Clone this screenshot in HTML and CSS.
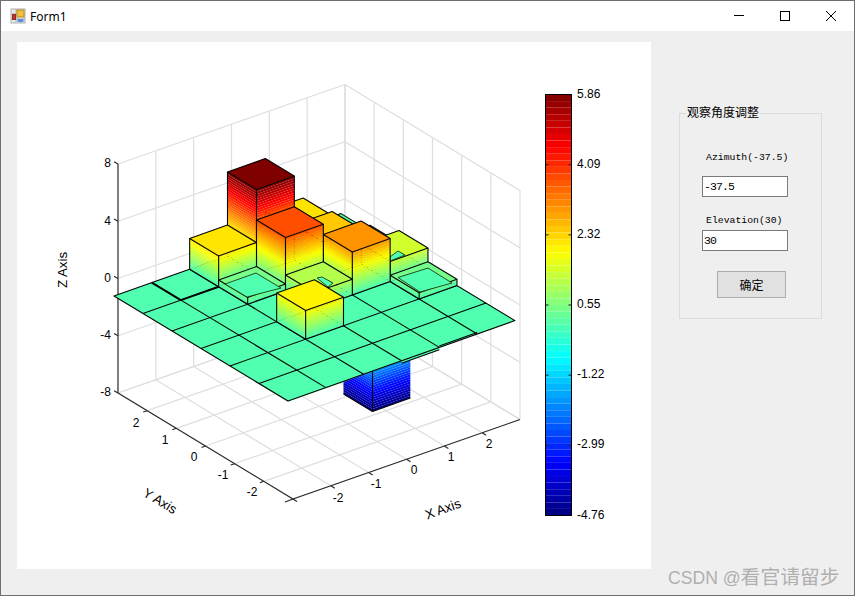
FILE: index.html
```html
<!DOCTYPE html>
<html lang="zh-CN">
  <head>
    <meta charset="UTF-8" />
    <title>Form1</title>
    <link rel="stylesheet" href="styles.css">
  </head>
  <body>
    <div class="window">
      <div class="titlebar">
        <svg class="app-icon" width="16" height="16" viewBox="0 0 16 16">
          <rect x="1" y="1" width="14" height="14" fill="#e8e8e8" stroke="#b0b0b0" />
          <path d="M1 6h5M6 1v14M1 11h14M11 11v4" stroke="#b0b0b0" fill="none" />
          <rect x="7" y="2" width="7" height="7" fill="#f3c13a" stroke="#b8862a" />
          <rect x="2.5" y="6.5" width="3" height="5" fill="#c8342c" stroke="#8e2a22" />
          <rect x="7.5" y="11" width="6" height="3" fill="#5b8fdc" />
        </svg>
        <span class="title-text">Form1</span>
        <div class="win-controls">
          <div class="win-btn">
            <svg width="12" height="12" viewBox="0 0 12 12"><path d="M1 5.5h10" stroke="#000" /></svg>
          </div>
          <div class="win-btn">
            <svg width="12" height="12" viewBox="0 0 12 12"><rect x="1.5" y="1.5" width="9" height="9" fill="none" stroke="#000" /></svg>
          </div>
          <div class="win-btn">
            <svg width="12" height="12" viewBox="0 0 12 12"><path d="M1 1l10 10M11 1L1 11" stroke="#000" /></svg>
          </div>
        </div>
      </div>

      <div class="client">
        <div class="picture">
          <svg id="chart" width="634" height="527" viewBox="17 42 634 527" xmlns="http://www.w3.org/2000/svg"></svg>
        </div>

        <fieldset class="view-group">
          <legend>观察角度调整</legend>
          <div class="view-form">
            <label class="field-label first">Azimuth(-37.5)</label>
            <input class="field-input first" type="text" value="-37.5" />
            <label class="field-label second">Elevation(30)</label>
            <input class="field-input second" type="text" value="30" />
            <button class="ok-btn">确定</button>
          </div>
        </fieldset>
      </div>

      <div class="watermark"><span class="wm-latin">CSDN @</span>看官请留步</div>
    </div>

    <script src="chart.js"></script>
  </body>
</html>
```

FILE: styles.css
```css
* {
  box-sizing: border-box;
}

body {
  margin: 0;
  width: 855px;
  height: 596px;
  overflow: hidden;
  font-family: "Liberation Sans", "Noto Sans CJK SC", sans-serif;
}

.window {
  position: relative;
  display: flex;
  flex-direction: column;
  width: 855px;
  height: 596px;
  border: 1px solid #6f6f6f;
  background: #efefef;
}

.titlebar {
  display: flex;
  align-items: center;
  height: 30px;
  background: #ffffff;
  padding-left: 9px;
}

.app-icon {
  flex: none;
}

.title-text {
  margin-left: 4px;
  font-family: "Noto Sans", sans-serif;
  font-size: 12px;
  color: #000000;
}

.win-controls {
  display: flex;
  margin-left: auto;
}

.win-btn {
  display: flex;
  align-items: center;
  justify-content: center;
  width: 46px;
  height: 30px;
}

.client {
  flex: 1;
  display: flex;
  align-items: flex-start;
  padding: 11px 0 0 16px;
}

.picture {
  flex: none;
  width: 634px;
  height: 527px;
  background: #ffffff;
}

#chart {
  display: block;
}

.grid-line {
  stroke: #dedede;
  stroke-width: 1.2;
  fill: none;
}

.axis-line {
  stroke: #262626;
  stroke-width: 1.1;
  fill: none;
}

.edge {
  stroke: #050505;
  stroke-width: 1.1;
  fill: none;
  stroke-linejoin: round;
}

.edge-thick {
  stroke-width: 2;
}

.edge-thin {
  stroke: #1a3a1a;
  stroke-width: 0.9;
}

.cbar-frame {
  stroke: #000000;
  stroke-width: 1;
  fill: none;
}

.tick-label {
  font-family: "Liberation Sans", sans-serif;
  font-size: 12px;
  fill: #000000;
}

.axis-title {
  font-size: 13.3px;
}

.view-group {
  flex: none;
  width: 143px;
  height: 214px;
  margin: 63px 0 0 28px;
  padding: 0 0 0 22px;
  border: 1px solid #dcdcdc;
}

.view-group legend {
  margin-left: -16px;
  padding: 0 1px;
  font-size: 12px;
  line-height: 16px;
  color: #000000;
}

.view-form {
  display: flex;
  flex-direction: column;
  align-items: flex-start;
}

.field-label {
  margin-left: 4px;
  font-family: "Liberation Mono", monospace;
  font-size: 9.8px;
  line-height: 12px;
  color: #000000;
}

.field-label.first {
  margin-top: 31px;
}

.field-label.second {
  margin-top: 18px;
}

.field-input {
  width: 86px;
  height: 21px;
  padding: 0 1px;
  border: 1px solid #7a7a7a;
  border-radius: 0;
  background: #ffffff;
  font-family: "Liberation Mono", monospace;
  font-size: 11.5px;
  letter-spacing: -0.9px;
  color: #000000;
  outline: none;
}

.field-input.first {
  margin-top: 12px;
}

.field-input.second {
  margin-top: 3px;
}

.ok-btn {
  width: 69px;
  height: 27px;
  margin: 20px 0 0 15px;
  padding: 0;
  border: 1px solid #adadad;
  background: #e1e1e1;
  font-family: "Noto Sans CJK SC", sans-serif;
  font-size: 12px;
  color: #000000;
}

.watermark {
  position: absolute;
  left: 667px;
  top: 561px;
  font-family: "Noto Sans CJK SC", sans-serif;
  font-size: 19.8px;
  line-height: 28px;
  color: #b0b0b0;
  white-space: nowrap;
}

.wm-latin {
  font-family: "Liberation Sans", sans-serif;
  font-size: 17.6px;
}
```

FILE: chart.js
```js
const svg = document.getElementById("chart");
const NS = "http://www.w3.org/2000/svg";

function el(name, attrs, text) {
  const node = document.createElementNS(NS, name);
  for (const key in attrs) node.setAttribute(key, attrs[key]);
  if (text !== undefined) node.textContent = text;
  svg.appendChild(node);
  return node;
}

// jet colormap, value range of the colorbar
const Z_MIN = -4.76;
const Z_MAX = 5.86;
const LEVELS = 64;

function jet(t) {
  const c = (v) => Math.round(255 * Math.max(0, Math.min(1, v)));
  const r = c(Math.min(4 * t - 1.5, -4 * t + 4.5));
  const g = c(Math.min(4 * t - 0.5, -4 * t + 3.5));
  const b = c(Math.min(4 * t + 0.5, -4 * t + 2.5));
  return `rgb(${r},${g},${b})`;
}
const colorOf = (z) => jet((z - Z_MIN) / (Z_MAX - Z_MIN));

// box projection: u, v run 0..6 along x and y, z is data height
const box = (u, v, z) => [118 + 37.83 * u + 29.17 * v, 393 - 13.25 * u + 17.67 * v - 14.31 * (z + 8)];
// bar grid projection, i, j are grid corners of the plane
const P = (i, j, h = 0) => [114 + 37.83 * i + 29 * j, 296 - 13.4 * i + 17.5 * j - 14.31 * h];

const pts = (list) => list.map((p) => p[0].toFixed(2) + "," + p[1].toFixed(2)).join(" ");
const line = (a, b, cls) => el("line", { x1: a[0], y1: a[1], x2: b[0], y2: b[1], class: cls });

// walls and floor
[-8, -4, 0, 4, 8].forEach((z) => {
  line(box(0, 0, z), box(6, 0, z), "grid-line");
  line(box(6, 0, z), box(6, 6, z), "grid-line");
});
for (let k = 0; k <= 6; k++) {
  line(box(k, 0, -8), box(k, 0, 8), "grid-line");
  line(box(6, k, -8), box(6, k, 8), "grid-line");
  line(box(k, 0, -8), box(k, 6, -8), "grid-line");
  line(box(0, k, -8), box(6, k, -8), "grid-line");
}

// axes
line(box(0, 0, 8), box(0, 0, -8), "axis-line");
line(box(0, 0, -8), [297, 501.5], "axis-line");
line(box(0, 6, -8), box(6, 6, -8), "axis-line");
[8, 4, 0, -4, -8].forEach((z) => {
  const p = box(0, 0, z);
  line(p, [p[0] - 4, p[1] - 2.2], "axis-line");
});
for (let k = 1; k <= 5; k++) {
  const py = box(0, k, -8);
  line(py, [py[0] - 4, py[1] + 1.4], "axis-line");
  const px = box(k, 6, -8);
  line(px, [px[0] + 4, px[1] + 2.4], "axis-line");
}
line(box(0, 6, -8), [285, 502], "axis-line");

function label(x, y, text, anchor, transform) {
  const attrs = { x, y, class: "tick-label", "text-anchor": anchor, "dominant-baseline": "central" };
  if (transform) {
    attrs.transform = transform;
    attrs.class = "tick-label axis-title";
  }
  el("text", attrs, text);
}

[[8, 163], [4, 221], [0, 278], [-4, 335], [-8, 392]].forEach((t) => label(111, t[1], t[0], "end"));
[[2, 136, 423], [1, 165, 440], [0, 194, 457], [-1, 223, 475], [-2, 252, 492]].forEach((t) =>
  label(t[1], t[2], t[0], "middle")
);
[[-2, 338, 498], [-1, 376, 484], [0, 414, 470], [1, 451, 457], [2, 489, 444]].forEach((t) =>
  label(t[1], t[2], t[0], "middle")
);
label(443, 509, "X Axis", "middle", "rotate(-20 443 509)");
label(160, 501, "Y Axis", "middle", "rotate(31 160 501)");
label(62, 270, "Z Axis", "middle", "rotate(-90 62 270)");

// side face cut in one polygon per colormap level, seams show like the original
function face(a, b, h0, h1) {
  const step = (Z_MAX - Z_MIN) / LEVELS;
  const lo = Math.min(h0, h1);
  const hi = Math.max(h0, h1);
  let z = Z_MIN + Math.floor((lo - Z_MIN) / step) * step;
  for (; z < hi; z += step) {
    const z0 = Math.max(z, lo);
    const z1 = Math.min(z + step, hi);
    if (z1 <= z0) continue;
    el("polygon", {
      points: pts([P(a[0], a[1], z0), P(b[0], b[1], z0), P(b[0], b[1], z1), P(a[0], a[1], z1)]),
      fill: colorOf(z0 + (z1 - z0) / 2),
    });
  }
}

function drawBar(i, j, h) {
  const A = [i, j];
  const B = [i, j + 1];
  const C = [i + 1, j + 1];
  const D = [i + 1, j];
  face(A, B, 0, h);
  face(B, C, 0, h);
  el("polygon", {
    points: pts([P(...A, h), P(...B, h), P(...C, h), P(...D, h)]),
    class: "edge",
    style: `fill:${colorOf(h)}`,
  });
  line(P(...B, 0), P(...B, h), "edge");
  line(P(...A, 0), P(...A, h), "edge");
  line(P(...C, 0), P(...C, h), "edge");
  line(P(...A, 0), P(...B, 0), "edge");
  line(P(...B, 0), P(...C, 0), "edge");
}

// the bar below the plane goes first, the plane hides its upper part
const hb = -4.76;
face([3, 4], [3, 5], 0, hb);
face([3, 5], [4, 5], 0, hb);
line(P(3, 4, hb), P(3, 5, hb), "edge");
line(P(3, 5, hb), P(4, 5, hb), "edge");
line(P(3, 5, hb), P(3, 5, 0), "edge");

// shallow dip under the front edge of the plane
const planeFill = "#50ffb0";
el("polygon", { points: pts([P(3, 6, 0), P(4, 6, 0), P(4, 6, -0.17), P(3, 6, -0.17)]), fill: planeFill });
line(P(3, 6, -0.17), P(4, 6, -0.17), "edge");

// plane
el("polygon", {
  points: pts([P(0, 0), [P(0, 6)[0], P(0, 6)[1] + 1], P(6, 6), P(6, 0)]),
  fill: planeFill,
  opacity: 0.5,
});
el("polygon", { points: pts([P(0, 0), P(0, 6), P(6, 6), P(6, 0)]), class: "edge", style: `fill:${planeFill}` });
for (let k = 1; k < 6; k++) {
  line(P(k, 0), P(k, 6), "edge");
  line(P(0, k), P(6, k), "edge");
}

// near flat cells only thicken the plane lines
line(P(1, 0), P(1, 1), "edge edge-thick");
line(P(1, 1), P(2, 1), "edge edge-thick");
line(P(4, 6, 0.1), P(5, 6, 0.1), "edge");

// heights per cell, i along x, j along y
const heights = {
  "2,0": 2.15,
  "2,1": 0.47,
  "2,3": 2.0,
  "3,0": 5.86,
  "3,1": 3.72,
  "3,2": 1.1,
  "4,0": 2.17,
  "4,1": 2.45,
  "4,2": 3.0,
  "5,0": 0.14,
  "5,1": 0.55,
  "5,2": 1.4,
  "5,3": 0.44,
};

// plane coloured patches seen on top of the low bars
const insets = {
  "2,1": [[225, 284], [256, 273], [281, 288], [247, 297]],
  "3,2": [[317, 278], [322, 277], [333, 283], [328, 287]],
  "5,2": [[390, 257], [398, 251], [405, 255], [390, 261]],
  "5,3": [[398, 277.5], [428, 268], [452, 283], [420, 292]],
};

for (let i = 5; i >= 0; i--) {
  for (let j = 0; j < 6; j++) {
    const key = i + "," + j;
    if (!heights[key]) continue;
    drawBar(i, j, heights[key]);
    if (insets[key]) {
      el("polygon", {
        points: pts(insets[key]),
        class: "edge edge-thin",
        style: `fill:${planeFill}`,
      });
    }
  }
}

// colorbar
const CB_X = 545.5;
const CB_W = 26;
const CB_TOP = 94.5;
const CB_H = 421;
for (let n = 0; n < LEVELS; n++) {
  const y = CB_TOP + (CB_H * n) / LEVELS;
  el("rect", {
    x: CB_X,
    y: y.toFixed(2),
    width: CB_W,
    height: (CB_H / LEVELS).toFixed(2),
    fill: jet((LEVELS - 1 - n + 0.5) / LEVELS),
  });
}
el("rect", { x: CB_X, y: CB_TOP, width: CB_W, height: CB_H, class: "cbar-frame" });
["5.86", "4.09", "2.32", "0.55", "-1.22", "-2.99", "-4.76"].forEach((text, n) => {
  const y = CB_TOP + (CB_H * n) / 6;
  label(577, y - 1, text, "start");
  if (n > 0 && n < 6) {
    line([CB_X, y], [CB_X + 3, y], "axis-line");
    line([CB_X + CB_W - 3, y], [CB_X + CB_W, y], "axis-line");
  }
});
```
